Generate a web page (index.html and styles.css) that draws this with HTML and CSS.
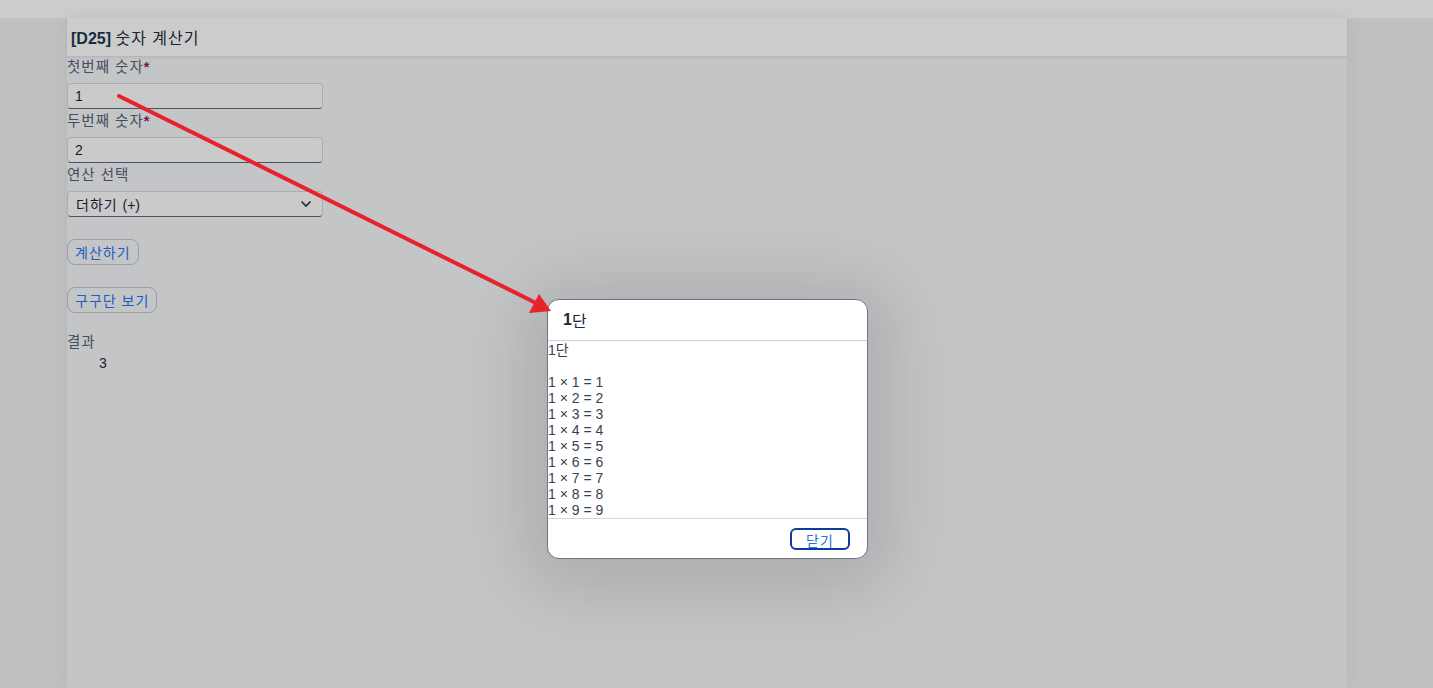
FILE: index.html
```html
<!DOCTYPE html>
<html lang="ko">
<head>
    <meta charset="UTF-8">
    <meta name="viewport" content="width=device-width, initial-scale=1.0">
    <title>[D25] 숫자 계산기</title>
    <link rel="stylesheet" href="styles.css">
</head>
<body>
    <div class="topbar"></div>

    <div class="page">
        <!-- Header -->
        <header class="page-header">
            <h1><b>[D25]</b> <span class="ko">숫자 계산기</span></h1>
        </header>

        <!-- Calculator form -->
        <form class="calc">
            <label class="field-label">첫번째 숫자<span class="req">*</span></label>
            <input class="field-input" type="text" value="1">

            <label class="field-label">두번째 숫자<span class="req">*</span></label>
            <input class="field-input" type="text" value="2">

            <label class="field-label">연산 선택</label>
            <div class="field-select">
                <span><span class="ko">더하기 </span>(+)</span>
                <svg width="12" height="8" viewBox="0 0 12 8"><path d="M1.5 1.5 L6 6 L10.5 1.5" fill="none" stroke="#1f2a37" stroke-width="1.6"/></svg>
            </div>

            <button type="button" class="btn btn-first">계산하기</button>
            <button type="button" class="btn">구구단 보기</button>

            <div class="result-label">결과</div>
            <div class="result-value">3</div>
        </form>
    </div>

    <!-- Gugudan dialog -->
    <div class="dialog">
        <div class="dialog-head"><b>1</b>단</div>
        <pre class="dialog-body">1단

1 × 1 = 1
1 × 2 = 2
1 × 3 = 3
1 × 4 = 4
1 × 5 = 5
1 × 6 = 6
1 × 7 = 7
1 × 8 = 8
1 × 9 = 9</pre>
        <div class="dialog-foot">
            <button type="button" class="close-btn">닫기</button>
        </div>
    </div>

    <!-- annotation arrow -->
    <svg class="arrow" width="1433" height="688" viewBox="0 0 1433 688">
        <line x1="119" y1="96" x2="534" y2="302" stroke="#e8222b" stroke-width="4" stroke-linecap="round"/>
        <polygon points="539,294 529,313 551,311" fill="#e8222b"/>
    </svg>
</body>
</html>
```

FILE: styles.css
```css
/* Reset */
* {
    margin: 0;
    padding: 0;
    box-sizing: border-box;
}

body {
    background: #bfc0c2;
    font-family: "Liberation Sans", Arial, "Noto Sans CJK KR", sans-serif;
    color: #1f2937;
    font-size: 14px;
    height: 688px;
    overflow: hidden;
}

.ko {
    letter-spacing: 1px;
}

.topbar {
    height: 18px;
    background: #cccccc;
}

/* Page column */
.page {
    width: 1280px;
    margin-left: 67px;
    height: 670px;
    background: #c4c5c7;
    box-shadow: 0 0 18px rgba(0, 0, 0, 0.05);
}

.page-header {
    height: 39px;
    background: #cccccc;
    border-bottom: 1px solid #b6b7b9;
    box-shadow: 0 1px 3px rgba(0, 0, 0, 0.06);
    display: flex;
    align-items: center;
    padding-left: 4px;
}

.page-header h1 {
    font-size: 16px;
    font-weight: normal;
    color: #1b2331;
}

.page-header h1 b {
    color: #1a2a3f;
}

/* Form */
.calc {
    display: flex;
    flex-direction: column;
    align-items: flex-start;
}

.field-label {
    display: block;
    height: 20px;
    line-height: 20px;
    margin-top: 2px;
    color: #454e5d;
    font-size: 14.5px;
    letter-spacing: 1px;
}

.field-label:first-child {
    margin-top: 0;
}

.req {
    color: #7a1550;
    font-weight: bold;
    letter-spacing: 0;
}

.field-input,
.field-select {
    width: 256px;
    height: 26px;
    margin-top: 6px;
    border: 1px solid #a9acb1;
    border-bottom-color: #4a5363;
    border-radius: 4px;
    background: #cacacb;
    font-family: inherit;
    font-size: 14px;
    color: #141a24;
    padding: 0 7px;
}

.field-select {
    display: flex;
    align-items: center;
    justify-content: space-between;
    padding: 0 10px 0 8px;
}

.btn {
    height: 26px;
    padding: 0 7px;
    margin-top: 22px;
    border: 1px solid #9ca0a6;
    border-radius: 8px;
    background: transparent;
    font-family: inherit;
    font-size: 14px;
    letter-spacing: 1px;
    color: #1c5ec2;
}

.result-label {
    margin-top: 19px;
    height: 20px;
    line-height: 20px;
    color: #454e5d;
    font-size: 14.5px;
    letter-spacing: 1px;
}

.result-value {
    height: 22px;
    line-height: 22px;
    padding-left: 32px;
    color: #1b2230;
}

/* Dialog */
.dialog {
    position: absolute;
    left: 547px;
    top: 299px;
    width: 321px;
    height: 260px;
    background: #fff;
    border: 1px solid #6f7580;
    border-radius: 12px;
    box-shadow: 0 8px 70px 25px rgba(0, 0, 0, 0.12);
    overflow: hidden;
    display: flex;
    flex-direction: column;
}

.dialog-head {
    height: 41px;
    padding-left: 15px;
    display: flex;
    align-items: center;
    font-size: 16px;
    color: #1f2937;
    border-bottom: 1px solid #d6d6d6;
    box-shadow: 0 1px 2px rgba(0, 0, 0, 0.05);
}

.dialog-body {
    height: 178px;
    padding-top: 1px;
    font-family: "Liberation Sans", Arial, "Noto Sans CJK KR", sans-serif;
    font-size: 14px;
    line-height: 16px;
    color: #374151;
    border-bottom: 1px solid #d6d6d6;
}

.dialog-foot {
    flex: 1;
    display: flex;
    justify-content: flex-end;
    align-items: center;
    padding-right: 17px;
}

.close-btn {
    width: 60px;
    height: 22px;
    border: 2px solid #0b3d9f;
    border-radius: 6px;
    background: #fff;
    font-family: inherit;
    font-size: 14px;
    letter-spacing: 1px;
    color: #2f6fdc;
}

.arrow {
    position: absolute;
    left: 0;
    top: 0;
    pointer-events: none;
}
```
